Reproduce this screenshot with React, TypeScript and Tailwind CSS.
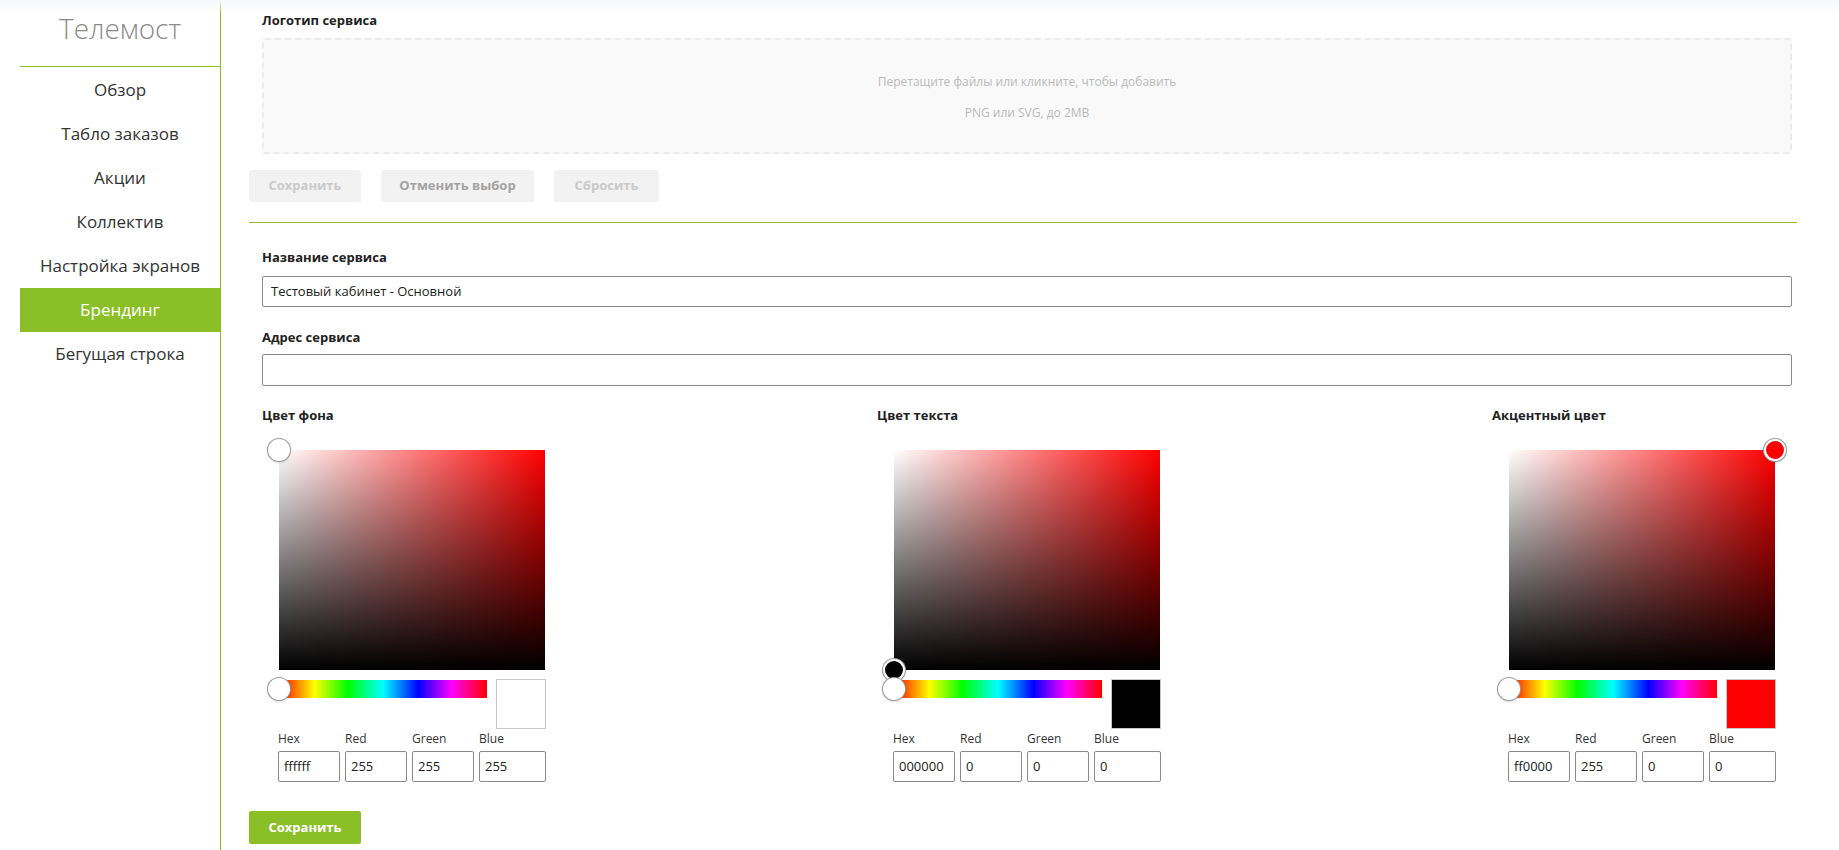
import React from 'react';

const navItems = [
  'Обзор',
  'Табло заказов',
  'Акции',
  'Коллектив',
  'Настройка экранов',
  'Брендинг',
  'Бегущая строка',
];

interface PickerProps {
  label: string;
  hex: string;
  rgb: [number, number, number];
  swatch: string;
  handle: 'tl' | 'bl' | 'tr';
  handleFill: string;
}

function ColorPicker({ label, hex, rgb, swatch, handle, handleFill }: PickerProps) {
  const handlePos =
    handle === 'tl'
      ? 'left-[-11px] top-[-11px]'
      : handle === 'bl'
      ? 'left-[-11px] bottom-[-11px]'
      : 'right-[-11px] top-[-11px]';

  return (
    <div className="w-[305px]">
      <div className="text-[13px] leading-[18px] font-bold text-[#222]">{label}</div>
      <div className="relative mt-[26px] ml-[17px] w-[266px] h-[220px] bg-[#ff0000]">
        <div className="absolute inset-0 bg-gradient-to-r from-white to-transparent" />
        <div className="absolute inset-0 bg-gradient-to-b from-transparent to-black" />
        <div
          className={`absolute ${handlePos} w-[22px] h-[22px] rounded-full border-2 border-white shadow-[0_0_0_1px_#9a9a9a,0_1px_3px_rgba(0,0,0,0.3)]`}
          style={{ backgroundColor: handleFill }}
        />
      </div>
      <div className="mt-[9px] ml-[17px] flex">
        <div className="relative mt-[1px] w-[208px] h-[18px] bg-[linear-gradient(to_right,#ff0000_0%,#ffff00_17%,#00ff00_33%,#00ffff_50%,#0000ff_67%,#ff00ff_83%,#ff0000_100%)]">
          <div className="absolute left-[-11px] top-[-2px] w-[22px] h-[22px] rounded-full bg-white shadow-[0_0_0_1px_#9a9a9a,0_1px_3px_rgba(0,0,0,0.3)]" />
        </div>
        <div
          className="ml-[9px] w-[50px] h-[50px] border border-[#c8c8c8]"
          style={{ backgroundColor: swatch }}
        />
      </div>
      <div className="ml-[16px] mt-[2px] flex gap-[5px]">
        {[
          ['Hex', hex, 'w-[62px]'],
          ['Red', String(rgb[0]), 'w-[62px]'],
          ['Green', String(rgb[1]), 'w-[62px]'],
          ['Blue', String(rgb[2]), 'w-[67px]'],
        ].map(([name, value, w]) => (
          <div key={name} className={w}>
            <div className="text-[12px] leading-[16px] text-[#333]">{name}</div>
            <div className="mt-[4px] h-[31px] border border-[#8a8a8a] rounded-[2px] px-[5px] flex items-center text-[13px] text-[#222]">
              {value}
            </div>
          </div>
        ))}
      </div>
    </div>
  );
}

export default function App() {
  return (
    <div
      className="relative flex min-h-[850px] bg-white text-[#222]"
      style={{ fontFamily: '"Open Sans", "Noto Sans", sans-serif' }}
    >
      <div className="pointer-events-none absolute inset-x-0 top-0 h-[14px] bg-gradient-to-b from-[#f6f7f9] to-transparent" />

      {/* Sidebar */}
      <aside className="w-[221px] shrink-0 pl-[20px]">
        <div className="w-[200px] h-[850px] border-r border-[#8bbf27] box-content">
          <div className="h-[67px] flex items-center justify-center pb-[10px] border-b border-[#8bbf27] text-[28px] font-light text-[#8a8a8a]">
            Телемост
          </div>
          <nav className="pt-[1px]">
            {navItems.map((item) => (
              <div
                key={item}
                className={`h-[44px] flex items-center justify-center text-[17px] ${
                  item === 'Брендинг' ? 'bg-[#8bbf27] text-white' : 'text-[#333]'
                }`}
              >
                {item}
              </div>
            ))}
          </nav>
        </div>
      </aside>

      {/* Main */}
      <main className="flex-1 pl-[28px] pr-[42px]">
        <div className="pl-[13px] pt-[11px] text-[13px] leading-[18px] font-bold text-[#222]">
          Логотип сервиса
        </div>
        <div className="mt-[9px] ml-[13px] mr-[5px] h-[116px] border-2 border-dashed border-[#ebebeb] rounded-[3px] bg-[#f9f9f9] flex flex-col items-center justify-center gap-[13px] pt-[2px] text-[12px] leading-[18px] text-[#b9b9b9]">
          <div>Перетащите файлы или кликните, чтобы добавить</div>
          <div>PNG или SVG, до 2MB</div>
        </div>
        <div className="mt-[16px] flex gap-[20px]">
          <button className="w-[112px] h-[32px] rounded-[2px] bg-[#f2f2f2] text-[13px] font-bold text-[#cacaca]">
            Сохранить
          </button>
          <button className="w-[153px] h-[32px] rounded-[2px] bg-[#f2f2f2] text-[13px] font-bold text-[#a3a3a3]">
            Отменить выбор
          </button>
          <button className="w-[105px] h-[32px] rounded-[2px] bg-[#f2f2f2] text-[13px] font-bold text-[#cacaca]">
            Сбросить
          </button>
        </div>
        <div className="mt-[20px] border-t border-[#8bbf27]" />

        <div className="pl-[13px]">
          <div className="mt-[25px] text-[13px] leading-[18px] font-bold">Название сервиса</div>
          <div className="mt-[10px] mr-[5px] h-[31px] border border-[#8a8a8a] rounded-[2px] px-[8px] flex items-center text-[13px] text-[#222]">
            Тестовый кабинет - Основной
          </div>
          <div className="mt-[21px] text-[13px] leading-[18px] font-bold">Адрес сервиса</div>
          <div className="mt-[8px] mr-[5px] h-[32px] border border-[#8a8a8a] rounded-[2px]" />

          <div className="mt-[20px] flex justify-between">
            <ColorPicker
              label="Цвет фона"
              hex="ffffff"
              rgb={[255, 255, 255]}
              swatch="#ffffff"
              handle="tl"
              handleFill="#ffffff"
            />
            <ColorPicker
              label="Цвет текста"
              hex="000000"
              rgb={[0, 0, 0]}
              swatch="#000000"
              handle="bl"
              handleFill="#000000"
            />
            <ColorPicker
              label="Акцентный цвет"
              hex="ff0000"
              rgb={[255, 0, 0]}
              swatch="#ff0000"
              handle="tr"
              handleFill="#ff0000"
            />
          </div>
        </div>

        <button className="mt-[29px] w-[112px] h-[33px] rounded-[2px] bg-[#8bbf27] text-[13px] font-bold text-white">
          Сохранить
        </button>
      </main>
    </div>
  );
}
